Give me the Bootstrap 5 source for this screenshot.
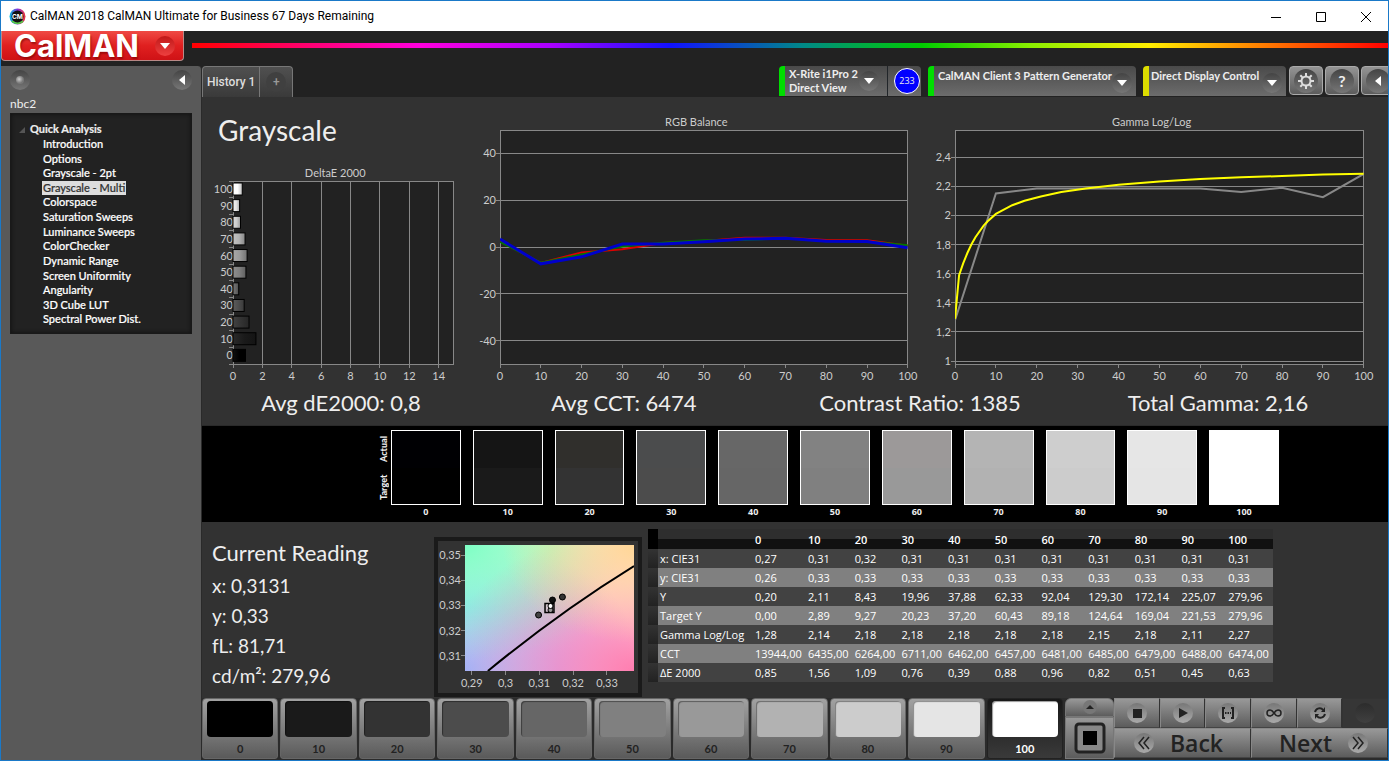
<!DOCTYPE html>
<html lang="en">
<head>
<meta charset="utf-8">
<meta name="viewport" content="width=device-width, initial-scale=1">
<title>CalMAN 2018</title>
<link href="https://cdn.jsdelivr.net/npm/bootstrap@5.3.0/dist/css/bootstrap.min.css" rel="stylesheet">
<style>
:root{--ui:Lato,"Open Sans",sans-serif;--segoe:"Open Sans","Noto Sans",sans-serif}
body{font:12px/16px var(--ui);color:#eee;background:#222;border:1px solid #1a79c8;min-height:100vh;overflow-x:hidden}
button{color:inherit;font:inherit;border:0;padding:0;background:none}
h1,h2,p,ul,dl{margin:0;padding:0}
.titlebar{height:30px;background:#fff;color:#000;font:12px/30px Roboto,sans-serif}
.titlebar button{width:45px;height:30px}
.brandstrip{height:35px}
.logo{width:183px;height:30px;background:linear-gradient(#ef4a44,#e02020 50%,#cf1216);border:1px solid #b98a88;border-top:0;border-radius:0 0 4px 4px;color:#fff}
.logo b{font:700 31px/30px Inter,sans-serif;text-shadow:1px 2px 2px #7009}
.knob{width:20px;height:20px;border-radius:50%;background:linear-gradient(#444,#777);display:inline-flex;align-items:center;justify-content:center;flex:none}
.knob.red{background:linear-gradient(#c01818,#ee4040)}
.rainbow{height:5px;margin-top:12px;background:linear-gradient(90deg,#f00 0,#f0d 19%,#a0f 30%,#11f 40%,#088 51%,#0c0 61%,#8e0 70%,#fe0 80%,#f70 90%,#f00)}
.side{width:201px;padding:4px 9px;background:#595959;border-radius:0 4px 0 0;border-right:1px solid #2a2a2a}
.profile{margin:6px 0 1px}
.tree{background:#222;border:1px solid #191919;box-shadow:inset 0 0 4px #111;height:221px;padding:6px 8px}
.tree h2{font:700 11px/17px var(--ui);-webkit-text-stroke:.2px}
.tree ul{display:grid;grid-template-rows:repeat(13,1fr);height:190px;margin-left:23px;font-size:11px;line-height:14px;font-weight:500}
.tree li{min-height:0}
.tree a{color:#fff;text-decoration:none;display:block;width:fit-content;line-height:14px;padding:0 1px;-webkit-text-stroke:.2px}
.tree a.active{background:#ddd;color:#333}
.tabs{height:31px}
.hist{background:linear-gradient(#505050,#3a3a3a);border:1px solid #777;border-bottom:0;border-radius:4px 4px 0 0;color:#ddd}
.hist button{font:500 12px/30px Roboto,sans-serif}
.hist .plus{width:33px;border-left:1px solid #777;color:#999}
.plus .knob{background:#404040}
.device{height:30px;background:linear-gradient(#4a4a4a,#6c6c6c);border-left:6px solid #0d0;border-radius:4px 4px 0 0;font:700 11px/14px var(--ui);text-align:left;white-space:nowrap}
.device.yellow{border-left-color:#dd0}
.device button{width:102px;text-align:left}
.countbox{padding:0 1px 0 6px}
.count{width:26px;height:26px;border-radius:50%;background:#00f;border:1px solid #fff;font:9px/24px var(--segoe);text-align:center}
.sq{width:34px;height:29px;border:1px solid #aaa;border-radius:4px;background:linear-gradient(#949494,#5c5c5c);display:flex;align-items:center;justify-content:center;flex:none}
.sq .knob{width:24px;height:24px}
.stage{background:#323232}
.graphs{display:grid;grid-template-columns:220fr 407fr 408fr;column-gap:47px;padding:17px 24px 0 31px;font-size:11px}
.graphs .caption{line-height:16px;text-align:center;color:#ccc;padding-right:16px}
.plot{background:#222;display:block;width:100%;overflow:visible}
.plot text{fill:#ccc;font-size:11px}
.plot .grid,.plot .frame{stroke:#888;fill:none;shape-rendering:crispEdges}
.bigtitle{font:28px/32px var(--ui);margin-left:-15px;height:51px}
.metrics{display:grid;grid-template-columns:278fr 288fr 304fr 292fr;padding:23px 24px 6px 0;font-size:22px;line-height:32px;text-align:center}
.strip{background:#000;height:97px;padding:4px 109px 0 175px;border-top:1px solid #2a2a2a}
.side-label{width:14px;font:900 9px/14px var(--ui)}
.side-label span{writing-mode:vertical-rl;transform:rotate(180deg);height:38px;text-align:center}
.patch{height:75px;border:1px solid #fff}
.tone{flex:1;text-align:center;font:700 9px/14px "Open Sans",sans-serif}
.reading{width:222px;font-size:19px;line-height:30px}
.reading h2{font-size:22px;line-height:32px;font-weight:400;margin-bottom:2px}
.cie{width:208px;height:160px;border:4px solid #1a1a1a;padding:4px 4px 0 27px}
.cie .plot{background:radial-gradient(ellipse at 100% 0,#ffd696,#fff0d000 55%),radial-gradient(ellipse at 100% 100%,#ff7db0,#ffb0d000 80%),radial-gradient(ellipse at 0 0,#7dffc4,#c8ffe000 65%),radial-gradient(ellipse at 0 100%,#98b8ff,#c8d8ff00 75%),radial-gradient(ellipse at 50% 0,#d0ffc0,#f0ffe000 60%),radial-gradient(ellipse at 0 50%,#a8fff8,#d0fffc00 60%),radial-gradient(ellipse at 55% 100%,#f0b8ff,#f8d8ff00 60%),#fffcf4}
.data{width:625px;font:11px/19px var(--segoe);color:#fff;table-layout:fixed;border-collapse:collapse}
.data td,.data th{padding:0 0 0 2px;font-weight:400;white-space:nowrap;height:19px}
.data thead th{height:20px;font-weight:600;background:linear-gradient(#2e2e2e 50%,#111 52%)}
.data tbody tr{background:#424242}
.data tbody tr:nth-child(even){background:#808080}
.data tr>:first-child{background:linear-gradient(#333,#222)}
.data thead tr>:first-child{background:#000}
.dock{height:62px;background:#2b2b2b;color:#222}
.level{flex:1;height:61px;border-radius:4px 4px 3px 3px;background:linear-gradient(#a2a2a2,#5a5a5a);border:1px solid #666;padding:2px 4px 0;font:700 11px/24px var(--ui)}
.level i{display:block;height:36px;border-radius:4px;box-shadow:inset 1px 1px 1px #0006}
.level.on{background:linear-gradient(#181818,#3a3a3a);border-color:#222;color:#fff}
.pad{background:linear-gradient(#989898,#5c5c5c);border:1px solid #777}
.ctl{width:274px}
.ctl .pad{flex:1;height:30px;border-color:#888 #333 #444 #888;display:flex;align-items:center;justify-content:center}
.ctl .knob{background:linear-gradient(#777,#aaa)}
.ctl .pad.off{background:#363636;border-color:#333}
.ctl .off .knob{background:linear-gradient(#2c2c2c,#404040)}
.nav-word{font:600 23px/28px "Open Sans",sans-serif}
</style>
</head>
<body class="d-flex flex-column">
<header>
 <div class="titlebar d-flex align-items-center">
  <svg class="ms-2 me-1" width="17" height="17" viewBox="0 0 17 17"><defs><linearGradient id="ring"><stop stop-color="#0bd"/><stop offset=".5" stop-color="#83d"/><stop offset="1" stop-color="#e33"/></linearGradient></defs><circle cx="8.500" cy="8.500" r="8" fill="url(#ring)"/><path d="M3 13a8 8 0 0 0 11 0" stroke="#5c4" stroke-width="2" fill="none"/><circle cx="8.500" cy="8.500" r="6" fill="#111"/><text x="8.500" y="11" font-size="6.500" font-weight="700" fill="#fff" text-anchor="middle" font-family="Inter">CM</text></svg>
  <span class="me-auto">CalMAN 2018 CalMAN Ultimate for Business 67 Days Remaining</span>
  <button aria-label="Minimize"><svg width="12" height="12"><path d="M1 6.500h10" stroke="#000"/></svg></button>
  <button aria-label="Maximize"><svg width="12" height="12"><path d="M1.500 1.500h9v9h-9z" fill="none" stroke="#000"/></svg></button>
  <button aria-label="Close"><svg width="12" height="12"><path d="M1 1l10 10M11 1L1 11" stroke="#000"/></svg></button>
 </div>
 <div class="brandstrip d-flex align-items-start">
  <button class="logo d-flex align-items-center justify-content-between ps-2 pe-1 me-2" aria-label="CalMAN menu"><b class="ms-1">CalMAN</b><span class="knob red me-1"><svg width="10" height="6"><path d="M0 0h10L5 6z" fill="#fff"/></svg></span></button>
  <div class="rainbow flex-grow-1"></div>
 </div>
</header>
<div class="d-flex flex-grow-1">
 <aside class="side flex-shrink-0">
  <div class="d-flex justify-content-between"><span class="knob" aria-hidden="true"><svg width="10" height="10"><defs><radialGradient id="ball" cx=".4" cy=".4"><stop stop-color="#ccc"/><stop offset="1" stop-color="#777"/></radialGradient></defs><circle cx="5" cy="5" r="4" fill="url(#ball)"/></svg></span><button class="knob" aria-label="Collapse"><svg width="6" height="10"><path d="M6 0v10L0 5z" fill="#fff"/></svg></button></div>
  <div class="profile">nbc2</div>
  <nav class="tree" aria-label="Workflow">
   <h2><svg class="me-1" width="7" height="7"><path d="M6 0v6H0z" fill="#555"/></svg>Quick Analysis</h2>
   <ul class="list-unstyled">
    <li><a href="#">Introduction</a></li><li><a href="#">Options</a></li><li><a href="#">Grayscale - 2pt</a></li><li><a href="#" class="active">Grayscale - Multi</a></li><li><a href="#">Colorspace</a></li><li><a href="#">Saturation Sweeps</a></li><li><a href="#">Luminance Sweeps</a></li><li><a href="#">ColorChecker</a></li><li><a href="#">Dynamic Range</a></li><li><a href="#">Screen Uniformity</a></li><li><a href="#">Angularity</a></li><li><a href="#">3D Cube LUT</a></li><li><a href="#">Spectral Power Dist.</a></li>
   </ul>
  </nav>
 </aside>
 <div class="flex-grow-1 d-flex flex-column" style="min-width:0">
  <div class="tabs d-flex">
   <div class="hist d-flex me-auto"><button class="px-1">History 1</button><button class="plus" aria-label="Add"><span class="knob">+</span></button></div>
   <div class="d-flex align-items-start overflow-hidden">
    <div class="device d-flex" style="margin-right:7px"><button class="d-flex ps-1 align-items-center"><span class="me-auto">X-Rite i1Pro 2<br>Direct View</span><span class="knob me-2"><svg width="10" height="6"><path d="M0 0h10L5 6z" fill="#fff"/></svg></span></button><span class="countbox border-start border-dark d-flex align-items-center"><span class="count">233</span></span></div>
    <button class="device d-flex ps-1 pe-1" style="width:208px"><span class="me-auto pt-1 lh-1">CalMAN Client 3 Pattern Generator</span><span class="knob align-self-center mt-1"><svg width="10" height="6"><path d="M0 0h10L5 6z" fill="#fff"/></svg></span></button>
    <button class="device yellow d-flex pe-1" style="width:143px;margin-left:7px"><span class="me-auto pt-1 lh-1" style="padding-left:2px">Direct Display Control</span><span class="knob align-self-center mt-1"><svg width="10" height="6"><path d="M0 0h10L5 6z" fill="#fff"/></svg></span></button>
    <button class="sq" style="margin-left:3px" aria-label="Settings"><span class="knob"><svg width="18" height="18" viewBox="-9 -9 18 18" stroke="#ddd" fill="none"><circle r="4.500" stroke-width="2"/><path d="M0-8v3M0 8V5M-8 0h3M8 0H5M-5.700-5.700l2 2M5.700 5.700l-2-2M-5.700 5.700l2-2M5.700-5.700l-2 2" stroke-width="2"/></svg></span></button>
    <button class="sq" style="margin-left:2px" aria-label="Help"><span class="knob fw-bold fs-6">?</span></button>
    <button class="sq" style="margin:0 -7px 0 2px" aria-label="Hide"><span class="knob"><svg width="6" height="10"><path d="M6 0v10L0 5z" fill="#fff"/></svg></span></button>
   </div>
  </div>
  <main class="stage flex-grow-1 d-flex flex-column">
   <section class="graphs">
    <div><h1 class="bigtitle">Grayscale</h1><div class="caption">DeltaE 2000</div><svg class="plot" id="delta" height="183"></svg></div>
    <div><div class="caption">RGB Balance</div><svg class="plot" id="rgb" height="234"></svg></div>
    <div><div class="caption">Gamma Log/Log</div><svg class="plot" id="gamma" height="234"></svg></div>
   </section>
   <section class="metrics"><div>Avg dE2000: 0,8</div><div>Avg CCT: 6474</div><div>Contrast Ratio: 1385</div><div>Total Gamma: 2,16</div></section>
   <section class="strip d-flex"><div class="side-label d-flex flex-column"><span>Actual</span><span>Target</span></div><div class="d-flex flex-grow-1" id="tones" style="gap:12px"></div></section>
   <section class="d-flex flex-grow-1 align-items-start" style="padding:7px 0 0 10px">
    <div class="reading pt-2"><h2>Current Reading</h2><p>x: 0,3131</p><p>y: 0,33</p><p>fL: 81,71</p><p>cd/m²: 279,96</p></div>
    <div class="cie mt-2"><svg class="plot" id="cie" height="126"></svg></div>
    <table class="data" style="margin-left:6px"><colgroup><col style="width:10px"><col style="width:95px"><col style="width:53px"><col span="10"></colgroup><thead><tr id="head"><th></th><th></th></tr></thead><tbody id="rows"></tbody></table>
   </section>
   <footer class="dock d-flex">
    <div class="d-flex flex-grow-1" id="levels" style="gap:2px"></div>
    <div class="d-flex flex-column" style="width:49px;margin-left:2px;height:61px"><button class="pad rounded-top" style="height:19px" aria-label="Expand"><svg class="d-block mx-auto" width="16" height="16"><circle cx="8" cy="7" r="7" fill="#777"/><path d="M4 9h8L8 5z" fill="#222"/></svg></button><button class="pad flex-grow-1" aria-label="Pattern window"><svg width="32" height="32"><rect x="2" y="2" width="28" height="28" rx="3" fill="#888" stroke="#222" stroke-width="3"/><path d="M9 9h14v14H9z" fill="#000"/></svg></button></div>
    <div class="ctl d-flex flex-column"><div class="d-flex">
     <button class="pad" aria-label="Stop"><span class="knob"><svg width="10" height="10"><path d="M1 1h9v9H1z" fill="#222"/></svg></span></button>
     <button class="pad" aria-label="Play"><span class="knob"><svg width="12" height="12"><path d="M2 1v10l9-5z" fill="#222"/></svg></span></button>
     <button class="pad" aria-label="Read series"><span class="knob"><svg width="14" height="12" stroke="#222" fill="none" stroke-width="2"><path d="M4 1H2v10h2M10 1h2v10h-2"/><path d="M4 6h6" stroke-dasharray="1.500 1"/></svg></span></button>
     <button class="pad" aria-label="Read continuous"><span class="knob"><svg width="16" height="10" stroke="#222" fill="none" stroke-width="1.500"><path d="M8 5C6 2 5 2 4 2a3 3 0 0 0 0 6c1 0 2 0 4-3s3-3 4-3a3 3 0 0 1 0 6C11 8 10 8 8 5z"/></svg></span></button>
     <button class="pad" aria-label="Refresh"><span class="knob"><svg width="14" height="14" stroke="#222" fill="none" stroke-width="2"><path d="M2 6c1-4 6-5 8-2M12 8c-1 4-6 5-8 2"/><path d="M12 1v5H8zM2 13V8h4z" fill="#222" stroke="none"/></svg></span></button>
     <button class="pad off" aria-label="Idle" disabled><span class="knob"></span></button></div>
     <div class="d-flex"><button class="pad pe-2"><span class="knob me-3"><svg width="14" height="14" stroke="#222" stroke-width="1.500" fill="none"><path d="M7 1L2 7l5 6M12 1L7 7l5 6"/></svg></span><span class="nav-word">Back</span></button><button class="pad ps-2"><span class="nav-word">Next</span><span class="knob ms-3"><svg width="14" height="14" stroke="#222" stroke-width="1.500" fill="none"><path d="M2 1l5 6-5 6M7 1l5 6-5 6"/></svg></span></button></div>
    </div>
   </footer>
  </main>
 </div>
</div>
<script src="https://cdn.jsdelivr.net/npm/bootstrap@5.3.0/dist/js/bootstrap.bundle.min.js"></script>
<script>
const put=(id,html)=>document.getElementById(id).innerHTML=html;
const steps=[0,10,20,30,40,50,60,70,80,90,100];
const frame='<rect class="frame" width="100%" height="100%"/>';
const seg=(x1,y1,x2,y2)=>`<line class="grid" x1="${x1}" y1="${y1}" x2="${x2}" y2="${y2}"/>`;
const xTick=(p,t)=>`<svg x="${p}%" y="100%" overflow="visible">${seg(0,0,0,4)}<text x="0" y="16" text-anchor="middle">${t}</text></svg>`;
const yTick=(p,t)=>seg('0',p+'%','100%',p+'%')+`<svg y="${p}%" overflow="visible">${seg(-4,0,0,0)}<text x="-4" y="4" text-anchor="end">${t}</text></svg>`;
const curve=(pts,c,w=2)=>`<polyline points="${pts.map(p=>p.join()).join(' ')}" fill="none" stroke="${c}" stroke-width="${w}" vector-effect="non-scaling-stroke"/>`;
const layer=(box,s)=>`<svg width="100%" height="100%" viewBox="${box}" preserveAspectRatio="none">${s}</svg>`;

/* DeltaE bars, one per grey level, on a 0-15 scale */
const de=[0.85,1.56,1.09,.76,.39,.88,.96,.82,.51,.45,.63];
let s=frame;
for(let v=0;v<15;v+=2){if(v)s+=seg(v/15*100+'%',0,v/15*100+'%','100%');s+=xTick(v/15*100,v)}
s+='<defs>'+steps.map((l,i)=>{const g=Math.round(l*2.55),e=Math.round(g*.75);return `<linearGradient id="b${i}"><stop stop-color="rgb(${g+15},${g+15},${g+15})"/><stop offset=".5" stop-color="rgb(${g},${g},${g})"/><stop offset="1" stop-color="rgb(${e},${e},${e})"/></linearGradient>`}).join('')+'</defs>';
steps.forEach((l,i)=>{const y=(10-i)/11*100;s+=`<svg y="${y}%" width="100%" overflow="visible">${seg(-4,0,0,0)}<text x="0" y="12" text-anchor="end">${l}</text><rect x="0" y="2" height="12" width="${de[i]/15*100}%" fill="url(#b${i})" stroke="#000"/></svg>`});
put('delta',s+seg(-4,'100%',0,'100%'));

s=frame;[40,20,0,-20,-40].forEach(v=>s+=yTick(50-v,v));steps.forEach(v=>s+=xTick(v,v));
const line=a=>a.map((v,i)=>[i*10,50-v]);
put('rgb',s+layer('0 0 100 100',curve(line([2.500,-6.800,-2.300,-1,1.700,2.600,4,4,3,2.900,.5]),'#d00',2)+curve(line([2.200,-6.700,-3.200,.2,1.800,2.900,3,3.700,2.500,2.400,.7]),'#070',2)+curve(line([3.400,-7.200,-4.200,1.300,1.300,2.200,3.400,3.700,2.500,2.300,-.3]),'#00c',3)));

s=frame;for(let v=10;v<=24;v+=2)s+=yTick((25.86-v)/16.06*100,String(v/10).replace('.',','));steps.forEach(v=>s+=xTick(v,v));
const gy=v=>(2.586-v)/1.606*100;
put('gamma',s+layer('0 0 100 100',curve([1.28,2.15,2.185,2.185,2.185,2.185,2.185,2.16,2.19,2.125,2.285].map((v,i)=>[i*10,gy(v)]),'#888')+curve([[0,1.29],[1,1.59],[2,1.67],[3,1.74],[4,1.8],[5,1.85],[7,1.93],[8,1.96],[10,2.01],[14,2.07],[17,2.1],[21,2.13],[26,2.16],[32,2.185],[40,2.21],[50,2.233],[60,2.25],[70,2.262],[80,2.27],[90,2.28],[100,2.286]].map(p=>[p[0],gy(p[1])]),'#ff0')));

/* chromaticity detail */
s='';['0,29','0,3','0,31','0,32','0,33'].forEach((t,i)=>s+=xTick(4+i*20,t));
['0,35','0,34','0,33','0,32','0,31'].forEach((t,i)=>s+=`<svg y="${8+i*20}%" overflow="visible">${seg(-4,0,0,0)}<text x="-4" y="4" text-anchor="end">${t}</text></svg>`);
s+=layer('0 0 170 126','<path d="M23 126Q95 67 170 21" fill="none" stroke="#000" stroke-width="2"/><g stroke="#000"><circle cx="98" cy="52" r="3" fill="#333"/><circle cx="88" cy="55" r="3" fill="#111"/><circle cx="74" cy="70" r="3" fill="#444"/><path d="M80.500 58.500h9v9h-9z" fill="none" stroke-width="1.500"/><circle cx="86" cy="65" r="2.500" fill="#999"/><circle cx="86" cy="61" r="2.500" fill="#fff"/></g>');
put('cie',s);

const actual=['#000003','#151515','#302f2c','#4b4c4d','#676767','#828282','#9c9999','#b4b4b4','#cecece','#e6e6e6','#fff'];
const target=['#000','#1a1a1a','#333','#4c4c4c','#666','#808080','#999','#b2b2b2','#ccc','#e5e5e5','#fff'];
put('tones',steps.map((l,i)=>`<div class="tone"><div class="patch" style="background:linear-gradient(${actual[i]} 50%,${target[i]} 50%)"></div>${l}</div>`).join(''));
put('levels',steps.map((l,i)=>`<button class="level${l==100?' on':''}"><i style="background:${target[i]}"></i>${l}</button>`).join(''));
document.getElementById('head').innerHTML+=steps.map(l=>`<th scope="col">${l}</th>`).join('');
const table={
'x: CIE31':'0,27 0,31 0,32 0,31 0,31 0,31 0,31 0,31 0,31 0,31 0,31',
'y: CIE31':'0,26 0,33 0,33 0,33 0,33 0,33 0,33 0,33 0,33 0,33 0,33',
'Y':'0,20 2,11 8,43 19,96 37,88 62,33 92,04 129,30 172,14 225,07 279,96',
'Target Y':'0,00 2,89 9,27 20,23 37,20 60,43 89,18 124,64 169,04 221,53 279,96',
'Gamma Log/Log':'1,28 2,14 2,18 2,18 2,18 2,18 2,18 2,15 2,18 2,11 2,27',
'CCT':'13944,00 6435,00 6264,00 6711,00 6462,00 6457,00 6481,00 6485,00 6479,00 6488,00 6474,00',
'ΔE 2000':'0,85 1,56 1,09 0,76 0,39 0,88 0,96 0,82 0,51 0,45 0,63'};
put('rows',Object.entries(table).map(([k,v])=>`<tr><td></td><th scope="row">${k}</th>${v.split(' ').map(c=>`<td>${c}</td>`).join('')}</tr>`).join(''));
</script>
</body>
</html>
